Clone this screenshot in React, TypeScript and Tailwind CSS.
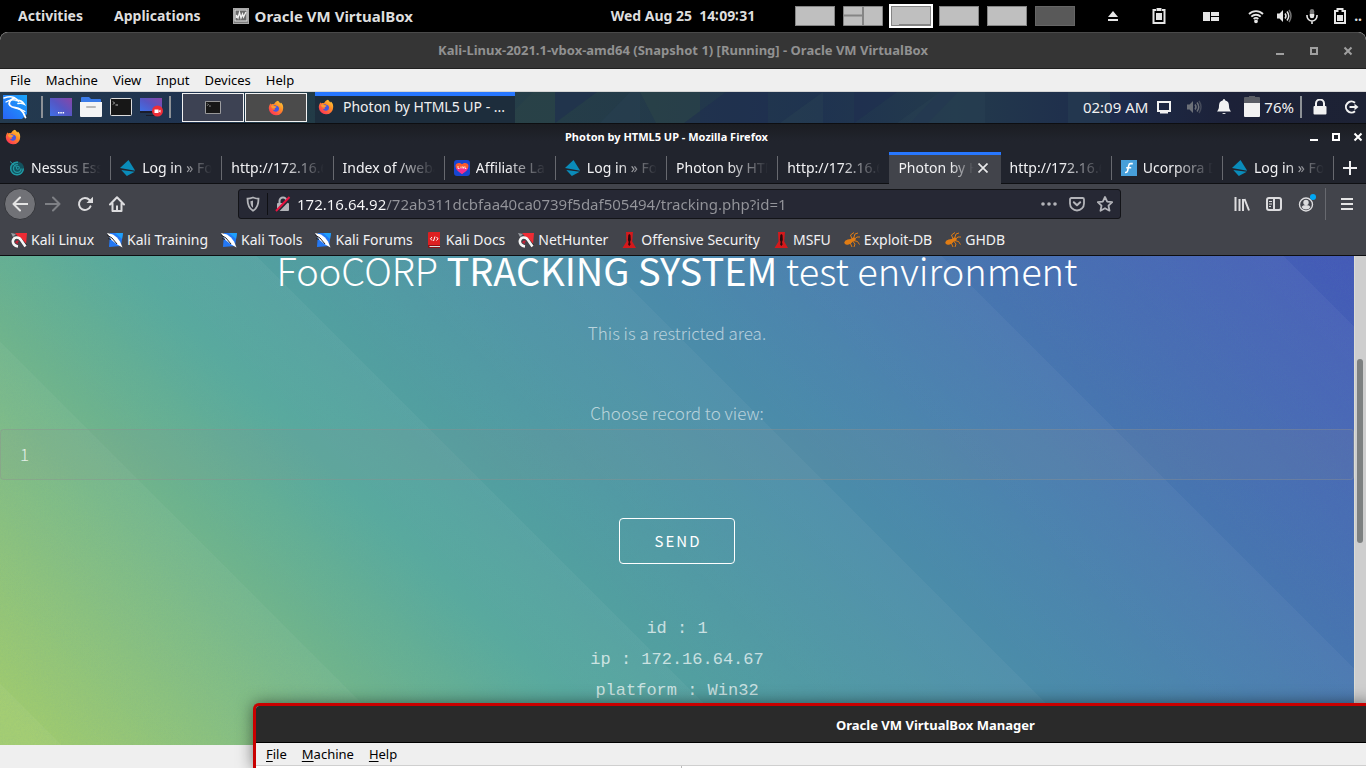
import React from "react";

type IconProps = { className?: string };

const Firefox = ({ className = "size-[16px]" }: IconProps) => (
  <svg viewBox="0 0 16 16" className={className} aria-hidden="true">
    <defs>
      <linearGradient id="fx" x1="1" y1="0" x2="0.2" y2="1">
        <stop offset="0" stopColor="#ffd93b" />
        <stop offset="0.45" stopColor="#ff8a26" />
        <stop offset="1" stopColor="#ff2d5a" />
      </linearGradient>
    </defs>
    <path d="M10 .8c.9 1 1.7 1.7 2.100 2.700.5-.2.7-.6.8-1C14.800 4 15.200 6 15.200 8A7.200 7.200 0 0 1 .8 8.300C.8 6 1.600 4.500 2.700 3.200c0 .6.1 1 .4 1.300C4 4 5 4 6 4.300 7 2.500 8 1.500 10 .8z" fill="url(#fx)" />
    <path d="M4.300 6.300c1-1 2.500-1.300 3.900-.5 1.800.2 3 1.500 2.900 3.100A3.300 3.300 0 0 1 4.800 9.800c1 .4 2 .2 2.600-.6-1.800-.2-3-1.200-3.100-2.900z" fill="#4657e0" />
    <path d="M3 6c1.200-1 2.800-.8 4 .2 1 0 1.500.3 1.500.8-.5.7-1.500.6-1.700 1.500-.8.6-2 .3-2.800-.5C3.300 7.500 3 6.700 3 6z" fill="#ff9a2e" />
  </svg>
);

const KaliMenu = () => (
  <svg viewBox="0 0 24 24" className="size-[24px]" aria-hidden="true">
    <defs>
      <linearGradient id="km" x1="1" y1="0" x2="0" y2="1">
        <stop offset="0" stopColor="#18a6fb" />
        <stop offset="1" stopColor="#2a63f5" />
      </linearGradient>
    </defs>
    <path d="M0 0h24v19l-5 5H0z" fill="url(#km)" />
    <g fill="none" stroke="#fff" strokeLinecap="round">
      <path d="M1 3c4-1.500 7-2 10-.5 2 1 3.500 2 4.500 4" strokeWidth="1.500" />
      <path d="M3 7c3-2 6-2.500 9-2" strokeWidth="1.300" />
      <path d="M11 3C7 5 5 8 7 10.500c2.500 3 7 1.500 10.500 4C20 16.500 21.500 19 22.500 22.500" strokeWidth="1.800" />
      <path d="M13 5.500c3-.5 6 .2 8 3.500-2-1-4-1-6-.5" strokeWidth="1.600" />
      <path d="M16 14.500c2 0 4 .5 6 2" strokeWidth="1.200" />
    </g>
  </svg>
);

const TerminalIcon = ({ className = "w-[22px] h-[18px]" }: IconProps) => (
  <svg viewBox="0 0 22 18" className={className} aria-hidden="true">
    <rect x=".5" y=".5" width="21" height="17" rx="1" fill="#171717" stroke="#ddd" />
    <path d="M3 3.500l1.500 1.500L3 6.500M5.500 7h2.500" stroke="#bbb" fill="none" />
  </svg>
);

const DesktopIcon = ({ record = false }: { record?: boolean }) => (
  <svg viewBox="0 0 24 20" className="h-[20px] w-[24px]" aria-hidden="true">
    <defs>
      <linearGradient id="dk" x1="0" y1="1" x2="1" y2="0">
        <stop offset="0" stopColor="#3f70e6" />
        <stop offset=".5" stopColor="#5556c4" />
        <stop offset="1" stopColor="#8a45a6" />
      </linearGradient>
    </defs>
    <rect x="0" y="1" width="22" height={record ? 13 : 18} fill="url(#dk)" />
    {record ? (
      <>
        <path d="M0 14h22v2H0zM6 18h10v1H6z" fill="#1a1d2b" />
        <circle cx="17.500" cy="14" r="5.500" fill="#ee2d38" />
        <path d="M14.500 12.500h4v3.500h-4zM18.500 14l2-1.300v3z" fill="#fff" />
      </>
    ) : (
      <path d="M8 15h1.500v1.500H8zM10.300 15h1.500v1.500h-1.500zM12.600 15h1.500v1.500h-1.500z" fill="#fff" />
    )}
  </svg>
);

const FolderIcon = () => (
  <svg viewBox="0 0 22 20" className="h-[20px] w-[22px]" aria-hidden="true">
    <path d="M1 1q0-1 1-1h7l2 2h9q1 0 1 1v5H1z" fill="#3b7be8" />
    <path d="M0 5h22v14q0 1-1 1H1q-1 0-1-1z" fill="#f4f4f4" />
    <rect x="6" y="9" width="10" height="2" rx="1" fill="#b9b9b9" />
  </svg>
);

const Nessus = () => (
  <svg viewBox="0 0 16 16" className="size-[16px]" aria-hidden="true">
    <circle cx="8" cy="8.500" r="7" fill="#12525e" />
    <g fill="none" stroke="#2199a3">
      <circle cx="8" cy="8.500" r="6.300" strokeWidth="1.500" strokeDasharray="30 9" />
      <circle cx="8.300" cy="8.500" r="3.800" strokeWidth="1.300" strokeDasharray="18 6" />
      <circle cx="8.800" cy="7.800" r="1.500" strokeWidth="1.100" />
      <path d="M1 1.500l6 5" strokeWidth="1" />
    </g>
  </svg>
);

const LoginMark = () => (
  <svg viewBox="0 0 16 16" className="size-[16px]" aria-hidden="true" fill="#0a8cba">
    <path d="M0 8L8.500 0l6.700 10.800z" />
    <path d="M1.300 10l13.500 1.700-8 4.300z" />
  </svg>
);

const HeartMark = () => (
  <svg viewBox="0 0 16 16" className="size-[16px]" aria-hidden="true">
    <rect width="16" height="16" rx="3" fill="#1746d1" />
    <path d="M8 14C4 11.500 1.500 9 1.500 6c0-3 4-4.300 6.500-1.800C10.500 1.700 14.500 3 14.500 6c0 3-2.500 5.500-6.500 8z" fill="#fb5a2c" />
    <path d="M8 14C5 12 3 10.500 2 8h12c-1 2.500-3 4-6 6z" fill="#f52d91" />
    <path d="M4 6v2.500h1.500M7 6.500v2M8.500 6.500l.7 2 .8-2M11 6.500v2h1.300" stroke="#fff" fill="none" strokeWidth=".8" />
  </svg>
);

const FMark = () => (
  <svg viewBox="0 0 16 16" className="size-[16px]" aria-hidden="true">
    <rect width="16" height="16" fill="#479fd9" />
    <path d="M11.800 3.600H9.500c-1 0-1.500.7-1.700 1.700L6.600 10.800c-.3 1.300-1 1.800-2.600 1.700M5.200 7.800h5" stroke="#fff" strokeWidth="1.600" fill="none" />
  </svg>
);

const DragonMark = ({ red = false }: { red?: boolean }) => (
  <svg viewBox="0 0 16 16" className="size-[16px]" aria-hidden="true">
    {red ? (
      <>
        <path d="M4 1h12l-1 12-5-5z" fill="#ee2b34" />
        <path d="M0 1l5 1-3 3z" fill="#9a9da3" />
        <path d="M9 7l6 7" stroke="#22242b" strokeWidth="3" />
        <path d="M14.500 14.500L10 8C8 4.500 3 4.800 2 8.300c-.8 3 1.500 5.700 5 6.200" stroke="#f6f6f6" strokeWidth="2.600" fill="none" />
        <path d="M4 10.500q1.500-3 4-1.500L6.500 11l1 1.500z" fill="#c91f35" />
      </>
    ) : (
      <>
        <path d="M3 1h13l-2 13-12 1z" fill="#2478f4" />
        <path d="M8 1h8l-1 6z" fill="#1fa0fb" />
        <path d="M0 1l6 1.500 4 3 3 4 2.500 6-6-3.500-5-4z" fill="#fff" />
        <path d="M0 3l5 3 5 6M1 6.500l3 1" stroke="#25272e" strokeWidth="1" fill="none" />
      </>
    )}
  </svg>
);

const DocsMark = () => (
  <svg viewBox="0 0 16 16" className="size-[16px]" aria-hidden="true">
    <path d="M2 1q0-1 1-1h11v13H2z" fill="#de1f21" />
    <path d="M2 13h12v3H3q-1 0-1-1z" fill="#8e1114" />
    <path d="M3.500 14H14v1H3.500z" fill="#ddd" />
    <path d="M6 5L4.500 6.800 6 8.500M10.500 5L12 6.800 10.500 8.500M9 4.500L7.500 9" stroke="#fff" fill="none" />
  </svg>
);

const TowerMark = () => (
  <svg viewBox="0 0 16 16" className="size-[16px]" aria-hidden="true">
    <path d="M5 0h7l-.8 9.500L15 16H1.500l4-6.500z" fill="#d4191c" />
    <path d="M7.300 3l1-1 1.200 1 .3 5-.8 2 .6 2.500-1.300 1.500-1.200-1.500.6-2.500-.8-2z" fill="#2a0a0c" />
  </svg>
);

const BugMark = () => (
  <svg viewBox="0 0 16 16" className="size-[16px]" aria-hidden="true">
    <g fill="#e07c14">
      <ellipse cx="4.500" cy="9.800" rx="4.300" ry="2.500" transform="rotate(-20 4.500 9.800)" />
      <ellipse cx="9.300" cy="7.500" rx="2.500" ry="1.800" transform="rotate(-25 9.300 7.500)" />
    </g>
    <path d="M8 7L6.500 3 10 .5M9.500 6.500L11 2l3-1M10 7.500l3-2.500 3 0M9.500 8.500l4 1 2 3M8.500 9l2.500 3-1 3M6 10.500L8 15" stroke="#e07c14" fill="none" strokeWidth="1" />
  </svg>
);

const VBoxMark = () => (
  <svg viewBox="0 0 16 16" className="size-[16px]" aria-hidden="true">
    <rect x=".5" y=".5" width="15" height="15" fill="#7c7c7c" stroke="#a9a9a9" />
    <rect x="2" y="2" width="12" height="11" fill="#6a6a6a" stroke="#e4e4e4" />
    <path d="M3.500 10V7l1.500 3 1.500-5.500L8 10l1.500-4 1 3L13 4" stroke="#f0f0f0" strokeWidth="1.300" fill="none" />
  </svg>
);

const Wifi = () => (
  <svg viewBox="0 0 16 16" className="size-[16px]" fill="none" stroke="#e6e6e6" strokeWidth="1.800" aria-hidden="true">
    <path d="M1 6a10 10 0 0 1 14 0M3.300 8.700a6.600 6.600 0 0 1 9.400 0" />
    <path d="M5.700 11a3.300 3.300 0 0 1 4.600 0" />
    <circle cx="8" cy="13.300" r="1" fill="#e6e6e6" />
  </svg>
);

const Speaker = ({ tone = "#e6e6e6" }: { tone?: string }) => (
  <svg viewBox="0 0 16 16" className="size-[16px]" fill="none" stroke={tone} strokeWidth="1.500" aria-hidden="true">
    <path d="M1 5.500h2.500L7 2v12l-3.500-3.500H1z" fill={tone} stroke="none" />
    <path d="M9 5.500q2 2.500 0 5M11 3.500q3.500 4.500 0 9" />
    <path d="M13 2q4 6 0 12" opacity=".5" />
  </svg>
);

const WindowButtons = ({ tone, close, gap }: { tone: string; close: string; gap: string }) => (
  <div className={`flex items-center ${gap}`}>
    <button aria-label="Minimize">
      <svg viewBox="0 0 10 10" className="size-[10px]"><path d="M1 8h8" stroke={tone} strokeWidth="2" /></svg>
    </button>
    <button aria-label="Maximize">
      <svg viewBox="0 0 10 10" className="size-[10px]"><rect x="2" y="2" width="6" height="6" fill="none" stroke={tone} strokeWidth="2" /></svg>
    </button>
    <button aria-label={close}>
      <svg viewBox="0 0 10 10" className="size-[10px]"><path d="M1.500 1.500l7 7M8.500 1.500l-7 7" stroke={tone} strokeWidth="2" /></svg>
    </button>
  </div>
);

function HostBar() {
  return (
    <header className="grid h-8 grid-cols-[1fr_auto_1fr] items-center bg-black text-[14px] leading-5 font-bold text-[#dedede]">
      <div className="flex items-center pl-[18px] whitespace-nowrap">
        <button>Activities</button>
        <button className="ml-[31px]">Applications</button>
        <button className="ml-8 flex items-center gap-1.5 text-[15px]"><VBoxMark />Oracle VM VirtualBox</button>
      </div>
      <time className="whitespace-pre">Wed Aug 25  14∶09∶31</time>
      <div className="flex items-center justify-between pl-10 pr-1">
        <div className="flex items-center gap-2">
          <div className="h-5 w-10 border border-[#858585] bg-[#bfbfbf]" />
          <svg viewBox="0 0 40 20" className="h-5 w-10" aria-hidden="true">
            <path d="M.5.5h39v19H.5z" fill="#bfbfbf" stroke="#858585" />
            <path d="M20 0v20M0 9.500h20" stroke="#858585" strokeWidth="2" />
          </svg>
          <div className="h-5 w-10 border border-[#858585] bg-[#bfbfbf] outline-2 outline-white">
            <div className="ml-[7px] mt-[17px] h-px bg-[#858585]" />
          </div>
          <div className="h-5 w-10 border border-[#858585] bg-[#bfbfbf]" />
          <div className="h-5 w-10 border border-[#858585] bg-[#bfbfbf]" />
          <div className="h-5 w-10 border border-[#666] bg-[#595959]" />
        </div>
        <div className="flex items-center">
          <svg viewBox="0 0 16 16" className="size-[16px]" fill="#e6e6e6" aria-hidden="true"><path d="M8 3l5 6H3zM3 11h10v2H3z" /></svg>
          <svg viewBox="0 0 16 16" className="ml-[30px] size-[16px]" aria-hidden="true">
            <path d="M5 2H2.500v13h11V2H11" fill="none" stroke="#e6e6e6" strokeWidth="2" />
            <path d="M5.500 0h5v3h-5zM5 5h6v7H5z" fill="#e6e6e6" />
          </svg>
          <svg viewBox="0 0 16 16" className="ml-9 size-[16px]" fill="#e6e6e6" aria-hidden="true"><path d="M0 4h7v9H0zM8 4h8v4H8zM8 9h8v4H8z" /></svg>
          <div className="ml-[29px] flex items-center gap-3">
            <Wifi />
            <Speaker />
            <svg viewBox="0 0 16 16" className="size-[16px]" fill="none" stroke="#e6e6e6" strokeWidth="1.600" aria-hidden="true">
              <rect x="5.800" y="1" width="4.400" height="9" rx="2.200" fill="#777" stroke="none" />
              <path d="M5.800 6h4.400v2a2.200 2.200 0 0 1-4.400 0z" fill="#e6e6e6" stroke="none" />
              <path d="M3 7v1a5 5 0 0 0 10 0V7M8 13v3" />
            </svg>
            <svg viewBox="0 0 16 16" className="size-[16px]" aria-hidden="true">
              <path d="M3 3h2.500V1h5v2H13v12H3z" fill="none" stroke="#e6e6e6" strokeWidth="2" />
              <path d="M5 7h6v6H5z" fill="#e6e6e6" />
            </svg>
          </div>
          <span className="ml-1.5">..</span>
        </div>
      </div>
    </header>
  );
}

function TaskPanel() {
  return (
    <div className="relative flex h-[31px] items-center overflow-hidden bg-[linear-gradient(90deg,#243a4e,#1f3350_14%,#213a46_20%,#263f48_36%,#243b49_46%,#1f3350_60%,#233a4c_70%,#1e2d4c_80%,#1c2138_90%,#1d2234)] pb-0.5 pl-[3px] pr-[7px] text-[15px] leading-5 text-[#f0f0f0]">
      <svg className="absolute inset-0 h-full w-full" preserveAspectRatio="none" viewBox="0 0 1366 31" aria-hidden="true">
        <path d="M515 31V18l18-18h22v31zM640 0h60v31h-44z" fill="#2c4547" opacity=".6" />
        <path d="M555 0h42l-42 31zM684 31l42-31h42v31zM854 0h43l-43 31zM910 31h18l30-31h-18zM1110 0h30v31h-30z" fill="#1e2c50" opacity=".5" />
        <path d="M600 31l30-31h10v31zM780 31l43-31v31zM897 31l43-31h45v31zM1068 0h42v31h-42z" fill="#284052" opacity=".5" />
      </svg>
      <button aria-label="Applications menu" className="relative"><KaliMenu /></button>
      <div className="relative ml-[14px] h-[22px] w-0.5 bg-[#8d9196]" />
      <div className="relative ml-[7px] flex items-center gap-1.5">
        <button aria-label="Show desktop"><DesktopIcon /></button>
        <button aria-label="Files"><FolderIcon /></button>
        <button aria-label="Terminal" className="ml-0.5"><TerminalIcon /></button>
        <button aria-label="Record screen" className="ml-0.5"><DesktopIcon record /></button>
      </div>
      <div className="relative ml-[5px] h-[22px] w-0.5 bg-[#8d9196]" />
      <button aria-label="Workspace 1" className="relative ml-[11px] mt-0.5 flex h-[29px] w-[62px] items-center justify-center border border-[#f2f2f2] bg-[#3d4253]">
        <TerminalIcon className="h-[13px] w-[16px]" />
      </button>
      <button aria-label="Workspace 2" className="relative ml-px mt-0.5 flex h-[29px] w-[62px] items-center justify-center border border-[#f2f2f2] bg-[#4b4b4b]">
        <Firefox />
      </button>
      <button className="relative ml-2 mt-0.5 flex h-[31px] w-[200px] items-center gap-[9px] border-t-4 border-[#2777ff] bg-[#1d2d3c] pb-1.5 pl-[3px] text-[14px] whitespace-nowrap">
        <Firefox />Photon by HTML5 UP - ...
      </button>
      <div className="relative ml-auto flex items-center">
        <time>02:09 AM</time>
        <svg viewBox="0 0 16 16" className="ml-2 size-[16px]" aria-hidden="true"><path d="M2 3h12v9H2z" fill="none" stroke="#f2f2f2" strokeWidth="2" /><path d="M4 13h8v1.500H4z" fill="#f2f2f2" /></svg>
        <span className="ml-[14px]"><Speaker tone="#6c7078" /></span>
        <svg viewBox="0 0 16 16" className="ml-[14px] size-[16px]" fill="#f2f2f2" aria-hidden="true"><path d="M8 0q1.300 0 1.300 1.500C12 2 13 4 13 7c0 3 1 4 2 5.500H1C2 11 3 10 3 7c0-3 1-5 3.700-5.500Q6.700 0 8 0zM6 14h4q-2 2-4 0z" /></svg>
        <svg viewBox="0 0 16 22" className="ml-3 h-[22px] w-[16px]" aria-hidden="true"><path d="M5 0h6v1h4q1 0 1 1v7H0V2q0-1 1-1h4z" fill="#5b5e66" /><path d="M0 7h16v13q0 1-1 1H1q-1 0-1-1z" fill="#f2f2f2" /></svg>
        <span className="ml-1">76%</span>
        <div className="ml-1.5 h-[22px] w-0.5 bg-[#8d9196]" />
        <svg viewBox="0 0 14 16" className="ml-[11px] h-[16px] w-[14px]" aria-hidden="true"><path d="M3 8V4.500a4 4 0 0 1 8 0V8" fill="none" stroke="#f2f2f2" strokeWidth="2" /><rect x=".5" y="7" width="13" height="8.500" rx="1" fill="#f2f2f2" /></svg>
        <svg viewBox="0 0 16 16" className="ml-4 size-[16px]" fill="none" stroke="#f2f2f2" strokeWidth="2" aria-hidden="true"><path d="M12 3.800a5.500 5.500 0 1 0 0 8.400M6.500 8h6" /><path d="M11.500 4.800L15.500 8l-4 3.200z" fill="#f2f2f2" stroke="none" /></svg>
      </div>
    </div>
  );
}

type Tab = { title: string; icon?: React.ReactNode; active?: boolean };
const tabs: Tab[] = [
  { title: "Nessus Essentials", icon: <Nessus /> },
  { title: "Log in » FooCorp", icon: <LoginMark /> },
  { title: "http://172.16.64.92" },
  { title: "Index of /webalizer" },
  { title: "Affiliate Lander", icon: <HeartMark /> },
  { title: "Log in » FooCorp", icon: <LoginMark /> },
  { title: "Photon by HTML5 UP" },
  { title: "http://172.16.64.81" },
  { title: "Photon by HTML5 UP", active: true },
  { title: "http://172.16.64.166" },
  { title: "Ucorpora Demo", icon: <FMark /> },
  { title: "Log in » FooCorp", icon: <LoginMark /> },
];

function TabStrip() {
  return (
    <div className="flex h-8 border-b border-[#0f1013] text-[14px] leading-5 text-[#f2f2f4]">
      <div role="tablist" className="flex min-w-0 flex-1">
        {tabs.map((tab, i) => (
          <div
            key={i}
            className={`relative flex min-w-0 flex-1 items-center pl-[9px] ${tab.active ? "-mb-px border-t-[3px] border-[#2777ff] bg-[#42444b] pb-[3px]" : ""}`}
          >
            <button role="tab" aria-selected={!!tab.active} className="flex min-w-0 flex-1 items-center gap-1.5 text-left">
              {tab.icon && <span className="shrink-0">{tab.icon}</span>}
              <span className={`min-w-0 flex-1 overflow-hidden whitespace-nowrap ${tab.active ? "[mask-image:linear-gradient(90deg,#000_calc(100%-24px),transparent)]" : "mr-[9px] [mask-image:linear-gradient(90deg,#000_calc(100%-40px),transparent)]"}`}>
                {tab.title}
              </span>
            </button>
            {tab.active ? (
              <button aria-label="Close tab" className="mr-[13px] ml-1 shrink-0">
                <svg viewBox="0 0 10 10" className="size-[10px]"><path d="M.5.5l9 9M9.500.5l-9 9" stroke="#e8e8ea" strokeWidth="1.700" /></svg>
              </button>
            ) : (
              i !== 7 && <div className="h-6 w-px bg-[#67696f]" />
            )}
          </div>
        ))}
      </div>
      <button aria-label="New tab" className="flex w-8 items-center justify-center">
        <svg viewBox="0 0 14 14" className="size-[14px]"><path d="M7 0v14M0 7h14" stroke="#f0f0f2" strokeWidth="2" /></svg>
      </button>
    </div>
  );
}

function NavBar() {
  return (
    <div className="flex h-10 items-center pl-1 pr-3">
      <button aria-label="Back" className="flex size-8 items-center justify-center rounded-full border border-[#34363b] bg-[#717277]">
        <svg viewBox="0 0 16 16" className="size-[16px]" fill="none" stroke="#e4e4e4" strokeWidth="2"><path d="M15.500 8H1.500M8 1.500L1.500 8 8 14.500" strokeLinecap="round" strokeLinejoin="round" /></svg>
      </button>
      <button aria-label="Forward" className="ml-[9px]">
        <svg viewBox="0 0 16 16" className="size-[16px]" fill="none" stroke="#7e8085" strokeWidth="2"><path d="M.5 8h14M8 1.500L14.500 8 8 14.500" strokeLinecap="round" strokeLinejoin="round" /></svg>
      </button>
      <button aria-label="Reload" className="ml-4">
        <svg viewBox="0 0 16 16" className="size-[16px]" fill="none" stroke="#dcdcde" strokeWidth="2"><path d="M13.500 10.300A6 6 0 1 1 12.500 4l1.500 1.500" strokeLinecap="round" /><path d="M16 .8V7h-6.500z" fill="#dcdcde" stroke="none" /></svg>
      </button>
      <button aria-label="Home" className="ml-4">
        <svg viewBox="0 0 16 16" className="size-[16px]" fill="none" stroke="#dcdcde" strokeWidth="2"><path d="M1 8.500L8 1.300l7 7.200M3.500 7.500V15h9V7.500" strokeLinecap="round" strokeLinejoin="round" /><path d="M7 9.500h2V15H7z" fill="#dcdcde" stroke="none" /></svg>
      </button>
      <div className="mx-[113px] flex h-[30px] min-w-0 flex-1 items-center rounded-[3px] border border-[#131418] bg-[#262834] px-[7px]">
        <svg viewBox="0 0 14 16" className="h-[16px] w-[14px] shrink-0" fill="none" stroke="#b3b4b9" strokeWidth="1.800" aria-hidden="true"><path d="M7 1.500c2 .8 4 1.200 5.500 1.200 0 6-1 9.500-5.500 12C2.500 12.200 1.500 8.700 1.500 2.700 3 2.700 5 2.300 7 1.500z" /><path d="M7 4.500c-1 .5-2 .7-2.600.7.100 3.300.8 5.300 2.600 6.600z" fill="#b3b4b9" stroke="none" /></svg>
        <div className="mx-[7px] h-[22px] w-px bg-[#0f1014]" />
        <svg viewBox="0 0 16 16" className="size-[16px] shrink-0" fill="none" aria-hidden="true"><path d="M4.500 8V5a3.500 3.500 0 0 1 7 0v3" stroke="#b3b4b9" strokeWidth="2" /><rect x="2" y="7" width="12" height="8" rx="1" fill="#b3b4b9" /><path d="M2 15.500L15.500 1.500" stroke="#262834" strokeWidth="3" /><path d="M1 15L14.500 1" stroke="#e9123f" strokeWidth="2" /></svg>
        <input
          aria-label="Address"
          defaultValue="172.16.64.92/72ab311dcbfaa40ca0739f5daf505494/tracking.php?id=1"
          className="ml-1.5 min-w-0 flex-1 bg-[linear-gradient(90deg,#f9f9fa_89px,#94959b_89px)] bg-clip-text text-[15px] leading-5 text-transparent outline-none"
        />
        <svg viewBox="0 0 16 16" className="size-[16px] shrink-0" fill="#b3b4b9" aria-hidden="true"><circle cx="2" cy="8" r="1.800" /><circle cx="8" cy="8" r="1.800" /><circle cx="14" cy="8" r="1.800" /></svg>
        <svg viewBox="0 0 16 16" className="ml-3 size-[16px] shrink-0" fill="none" stroke="#b3b4b9" strokeWidth="1.800" strokeLinecap="round" strokeLinejoin="round" aria-hidden="true"><path d="M2.500 2h11q1.500 0 1.500 1.500V7.500a7 7 0 0 1-14 0V3.500Q1 2 2.500 2z" /><path d="M4.800 6.200L8 9.300l3.200-3.100" strokeWidth="2" /></svg>
        <svg viewBox="0 0 16 16" className="ml-3 size-[16px] shrink-0" fill="none" stroke="#b3b4b9" strokeWidth="1.800" strokeLinejoin="round" aria-hidden="true"><path d="M8 1l2.200 4.600 5 .6-3.700 3.500 1 5L8 12.200 3.500 14.700l1-5L.8 6.200l5-.6z" /></svg>
      </div>
      <button aria-label="Library">
        <svg viewBox="0 0 16 16" className="size-[16px]" stroke="#dcdcde" strokeWidth="2"><path d="M1.500 1v14M5.500 3v12M9 3v12M10.500 3L15 14.500" /></svg>
      </button>
      <button aria-label="Sidebars" className="ml-4">
        <svg viewBox="0 0 16 16" className="size-[16px]" fill="none" stroke="#dcdcde"><rect x="1" y="2" width="14" height="12" rx="2" strokeWidth="2" /><path d="M8 2v12" strokeWidth="2" /><path d="M3 5.500h3M3 8h3M3 10.500h2" /></svg>
      </button>
      <button aria-label="Account" className="relative ml-4">
        <svg viewBox="0 0 16 16" className="size-[16px]" fill="none"><circle cx="8" cy="8.500" r="6.500" stroke="#dcdcde" strokeWidth="1.400" /><circle cx="8" cy="6.500" r="2.700" fill="#dcdcde" /><path d="M3.500 11q1-2 4.500-2t4.500 2q-1.500 2.600-4.500 2.600T3.500 11z" fill="#dcdcde" /></svg>
        <span className="absolute -top-0.5 -right-0.5 size-1.5 rounded-full bg-[#00a7f5]" />
      </button>
      <div className="ml-[11px] h-8 w-px bg-[#67696f]" />
      <button aria-label="Menu" className="ml-[14px]">
        <svg viewBox="0 0 14 14" className="size-[14px]" stroke="#e4e4e4" strokeWidth="2"><path d="M1 2h12M1 7h12M1 12h12" /></svg>
      </button>
    </div>
  );
}

const bookmarks: { label: string; icon: React.ReactNode }[] = [
  { label: "Kali Linux", icon: <DragonMark red /> },
  { label: "Kali Training", icon: <DragonMark /> },
  { label: "Kali Tools", icon: <DragonMark /> },
  { label: "Kali Forums", icon: <DragonMark /> },
  { label: "Kali Docs", icon: <DocsMark /> },
  { label: "NetHunter", icon: <DragonMark red /> },
  { label: "Offensive Security", icon: <TowerMark /> },
  { label: "MSFU", icon: <TowerMark /> },
  { label: "Exploit-DB", icon: <BugMark /> },
  { label: "GHDB", icon: <BugMark /> },
];

function GuestPage() {
  return (
    <div className="flex h-[489px]">
      <main className="relative min-w-0 flex-1 overflow-hidden bg-[repeating-linear-gradient(225deg,rgba(255,255,255,0.04)_50px,rgba(255,255,255,0)_292px),linear-gradient(45deg,#a2cc6e_2%,#55a89c_33%,#4a89ab_62%,#4358b8_100%)] text-center font-['Noto_Sans_CJK_JP','Lato',sans-serif] font-light">
        <svg className="absolute inset-0 h-full w-full opacity-10" aria-hidden="true">
          <filter id="grain"><feTurbulence type="fractalNoise" baseFrequency="0.6" numOctaves="2" /><feColorMatrix values="0 0 0 0 0.1  0 0 0 0 0.3  0 0 0 0 0.35  0 0 0 1.200 -0.3" /></filter>
          <rect width="100%" height="100%" filter="url(#grain)" />
        </svg>
        <div className="relative -mt-1.5">
          <h1 className="text-[38px] leading-10 text-white">FooCORP <strong className="font-normal">TRACKING SYSTEM</strong> test environment</h1>
          <p className="mt-[29px] text-[17px] leading-7 text-white/60">This is a restricted area.</p>
          <form onSubmit={(e) => e.preventDefault()}>
            <label htmlFor="record" className="mt-[52px] block text-[17px] leading-7 text-white/60">Choose record to view:</label>
            <input id="record" defaultValue="1" className="mt-0.5 block h-[51px] w-full rounded border border-[#90909060] bg-[#90909020] px-[19px] pb-0.5 text-[17px] text-white/80 outline-none" />
            <button className="mt-[38px] h-[46px] rounded border border-white pl-[35px] pr-[33px] text-[15px] font-normal tracking-[2px] text-white">SEND</button>
          </form>
          <div className="mt-[49px] font-['Liberation_Mono',monospace] text-[17px] leading-[31px] font-normal text-white/70">
            <p>id : 1</p>
            <p>ip : 172.16.64.67</p>
            <p>platform : Win32</p>
          </div>
        </div>
      </main>
      <div className="w-3 border-l border-[#dcdcd4] bg-[#cecece] pt-[103px] pl-0.5">
        <div className="h-[184px] w-1.5 rounded-full bg-[#7d8080]" />
      </div>
    </div>
  );
}

function ManagerWindow() {
  return (
    <section className="absolute top-[703px] -right-1.5 bottom-0 left-[253px] flex flex-col overflow-hidden rounded-tl-md border-t-[3px] border-l-[3px] border-[#c80000] bg-white shadow-[0_0_16px_rgba(0,0,0,0.5)]">
      <div className="flex h-[37px] shrink-0 items-center border-b border-black bg-[#2a2a2a] pt-0.5 pl-[580px] text-[13px] leading-5 font-bold whitespace-nowrap text-white">
        Oracle VM VirtualBox Manager
      </div>
      <nav className="flex h-[23px] shrink-0 items-center gap-[15px] border-b border-[#cfcfcf] bg-[#efefef] pt-0.5 pl-2.5 text-[13px] text-black">
        {["File", "Machine", "Help"].map((m) => (
          <button key={m}><span className="underline underline-offset-2">{m[0]}</span>{m.slice(1)}</button>
        ))}
      </nav>
      <div className="w-[426px] flex-1 border-r border-[#bdbdbd]" />
    </section>
  );
}

export default function App() {
  return (
    <div className="relative h-screen overflow-hidden bg-black font-['Noto_Sans',sans-serif]">
      <HostBar />
      <div className="overflow-hidden rounded-t-lg bg-[#efefef]">
        <div className="grid h-[37px] grid-cols-[1fr_auto_1fr] items-center rounded-t-lg border-t border-b border-t-[#4a4a4a] border-b-[#202020] bg-[#353535] text-[13px] font-bold text-[#919191]">
          <h2 className="col-start-2">Kali-Linux-2021.1-vbox-amd64 (Snapshot 1) [Running] - Oracle VM VirtualBox</h2>
          <div className="flex justify-end pr-[13px]"><WindowButtons tone="#a0a0a0" close="Close machine" gap="gap-6" /></div>
        </div>
        <nav className="flex h-[23px] items-center gap-[15px] border-b border-[#d5d5d5] bg-[#efefef] pt-0.5 pl-2.5 text-[13px] text-black">
          {["File", "Machine", "View", "Input", "Devices", "Help"].map((m) => (
            <button key={m}>{m}</button>
          ))}
        </nav>
        <TaskPanel />
        <div className="border-t border-b border-[#0d0e11] bg-[#21242d]">
          <div className="grid h-7 grid-cols-[1fr_auto_1fr] items-center bg-linear-to-b from-[#1b1d22] to-[#21242d] to-60% pb-0.5 pl-[5px] text-[11px] font-bold text-white">
            <Firefox />
            <h2 className="mr-[38px]">Photon by HTML5 UP - Mozilla Firefox</h2>
            <div className="flex justify-end pr-[3px]"><WindowButtons tone="#ffffff" close="Close browser" gap="gap-3" /></div>
          </div>
          <TabStrip />
          <div className="bg-[#42444b]">
            <NavBar />
            <nav className="flex h-[31px] items-center gap-[13px] pl-[11px] text-[14px] leading-5 text-[#f2f2f4]">
              {bookmarks.map((b) => (
                <a key={b.label} href="#" className="flex items-center gap-1 whitespace-nowrap">{b.icon}{b.label}</a>
              ))}
            </nav>
          </div>
        </div>
        <GuestPage />
        <div className="h-6" />
      </div>
      <ManagerWindow />
    </div>
  );
}
